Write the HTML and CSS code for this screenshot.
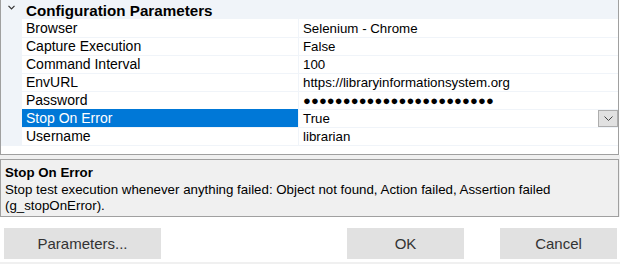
FILE: index.html
```html
<!DOCTYPE html>
<html>
<head>
<meta charset="utf-8">
<link rel="stylesheet" href="styles.css">
</head>
<body>
<div class="window">
  <div class="grid">
    <div class="cat-row">
      <span class="cat-toggle">
        <svg width="7" height="5" viewBox="0 0 7 5"><path d="M0.5 0.8 L3.5 3.8 L6.5 0.8" fill="none" stroke="#333" stroke-width="1.2"/></svg>
      </span>
      <span class="cat-title">Configuration Parameters</span>
    </div>
    <div class="row"><span class="gutter"></span><span class="name">Browser</span><span class="value">Selenium - Chrome</span></div>
    <div class="row"><span class="gutter"></span><span class="name">Capture Execution</span><span class="value">False</span></div>
    <div class="row"><span class="gutter"></span><span class="name">Command Interval</span><span class="value">100</span></div>
    <div class="row"><span class="gutter"></span><span class="name">EnvURL</span><span class="value">https://libraryinformationsystem.org</span></div>
    <div class="row"><span class="gutter"></span><span class="name">Password</span><span class="value dots">●●●●●●●●●●●●●●●●●●●●●●●●</span></div>
    <div class="row selected"><span class="gutter"></span><span class="name">Stop On Error</span><span class="value">True<span class="drop-btn"><svg width="9" height="5" viewBox="0 0 9 5"><path d="M0.5 0.5 L4.5 4.5 L8.5 0.5" fill="none" stroke="#444" stroke-width="1"/></svg></span></span></div>
    <div class="row"><span class="gutter"></span><span class="name">Username</span><span class="value">librarian</span></div>
  </div>
  <div class="desc-area">
    <div class="desc">
      <div class="desc-title">Stop On Error</div>
      <div class="desc-text">Stop test execution whenever anything failed: Object not found, Action failed, Assertion failed (g_stopOnError).</div>
    </div>
  </div>
  <div class="buttons">
    <button class="btn btn-params">Parameters...</button>
    <span class="spacer"></span>
    <button class="btn btn-ok">OK</button>
    <button class="btn btn-cancel">Cancel</button>
  </div>
  <div class="bottom-strip"></div>
</div>
</body>
</html>
```

FILE: styles.css
```css
* { box-sizing: border-box; }
html, body { margin: 0; padding: 0; }
body {
  width: 620px;
  height: 264px;
  overflow: hidden;
  background: #ffffff;
  font-family: "Liberation Sans", Arial, sans-serif;
  color: #000;
}
.window {
  width: 620px;
  display: flex;
  flex-direction: column;
}
.grid {
  width: 619px;
  height: 155px;
  background: #fff;
  border-left: 1px solid #a0a0a0;
  border-right: 1px solid #a0a0a0;
  border-bottom: 1px solid #a0a0a0;
  display: flex;
  flex-direction: column;
}
.cat-row {
  height: 19px;
  background: #f0f4f9;
  display: flex;
  align-items: center;
  flex-shrink: 0;
}
.cat-toggle {
  width: 25px;
  display: flex;
  justify-content: flex-start;
  padding-left: 7px;
  padding-bottom: 4px;
}
.cat-title {
  font-weight: bold;
  font-size: 15.2px;
  line-height: 19px;
  padding-top: 1px;
}
.row {
  display: grid;
  grid-template-columns: 21px 277px 1fr;
  height: 18px;
  flex-shrink: 0;
  line-height: 17px;
}
.gutter {
  background: #f0f4f9;
}
.name {
  font-size: 14px;
  padding-left: 4px;
  padding-top: 1px;
  border-bottom: 1px solid #f0f4f9;
  border-right: 1px solid #f0f4f9;
  white-space: nowrap;
  overflow: hidden;
}
.value {
  font-size: 13.3px;
  padding-left: 4px;
  padding-top: 1px;
  border-bottom: 1px solid #f0f4f9;
  white-space: nowrap;
  display: flex;
  align-items: center;
}
.value.dots {
  font-size: 13px;
  letter-spacing: 0.1px;
}
.selected .name {
  background: #0078d7;
  color: #fff;
}
.drop-btn {
  margin-left: auto;
  width: 20px;
  height: 17px;
  margin-top: -1px;
  background: #e1e1e1;
  border: 1px solid #adadad;
  display: flex;
  align-items: center;
  justify-content: center;
}
.desc-area {
  background: #f0f0f0;
  padding-top: 4px;
  width: 620px;
}
.desc {
  width: 619px;
  height: 58px;
  border: 1px solid #a0a0a0;
  background: #f0f0f0;
  padding: 5px 4px 0 4px;
  font-size: 13.3px;
  line-height: 16.6px;
  color: #000;
}
.desc-title {
  font-weight: bold;
}
.buttons {
  display: flex;
  padding: 11px 3px 0 4px;
  height: 45px;
  width: 620px;
}
.spacer { flex: 1; }
.btn {
  height: 31px;
  background: #e1e1e1;
  border: none;
  font-family: "Liberation Sans", Arial, sans-serif;
  font-size: 15px;
  color: #333;
  padding: 0;
}
.btn-params { width: 157px; }
.btn-ok { width: 117px; margin-right: 36px; }
.btn-cancel { width: 117px; }
.bottom-strip {
  height: 4px;
  background: #f0f0f0;
}
```
